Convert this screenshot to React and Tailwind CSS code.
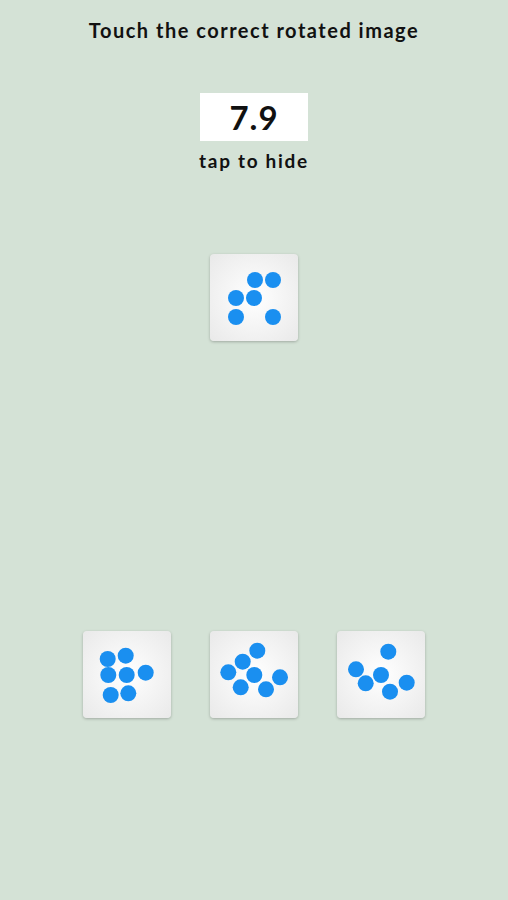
const cards = {
  target: [[45, 26], [63, 26], [26, 44], [44, 44], [26, 63], [63, 63]],
  a: [[24.7, 28], [42.7, 24.7], [25.3, 44], [43.7, 44], [62.7, 41.7], [27.7, 64], [45.3, 62.3]],
  b: [[47.3, 19.7], [32.7, 30.7], [18.3, 41.3], [44.3, 44], [70, 46.3], [30.7, 56.3], [56, 58.3]],
  c: [[51.3, 20.7], [19, 38.3], [44, 44], [28.7, 52.3], [69.7, 51.7], [53, 60.7]],
}

function Card({ dots }) {
  return (
    <button className="w-[88px] h-[87px] rounded-[4px] bg-[radial-gradient(circle,#ffffff_0%,#f3f3f3_55%,#e9e9e9_100%)] shadow-[0_1px_3px_rgba(0,0,0,0.25)]">
      <svg width="88" height="87" viewBox="0 0 88 87">
        {dots.map(([x, y], i) => (
          <circle key={i} cx={x} cy={y} r="8" fill="#1a8ff0" />
        ))}
      </svg>
    </button>
  )
}

export default function App() {
  return (
    <div className="w-[508px] h-[900px] bg-[#d4e2d6] flex flex-col items-center font-['Lato','DejaVu_Sans',sans-serif] text-[#111]">
      <h1 className="mt-[17px] text-[20px] leading-[26px] font-bold tracking-[1.5px]">
        Touch the correct rotated image
      </h1>

      {/* timer */}
      <div className="mt-[50px] w-[108px] h-[48px] bg-white flex items-center justify-center">
        <span className="text-[33px] font-bold leading-none tracking-[1px]">7.9</span>
      </div>
      <p className="mt-[8px] text-[19px] leading-[24px] font-bold tracking-[1.7px]">tap to hide</p>

      <div className="mt-[81px]">
        <Card dots={cards.target} />
      </div>

      <div className="mt-[284px] flex gap-[39px]">
        <Card dots={cards.a} />
        <Card dots={cards.b} />
        <Card dots={cards.c} />
      </div>
    </div>
  )
}
